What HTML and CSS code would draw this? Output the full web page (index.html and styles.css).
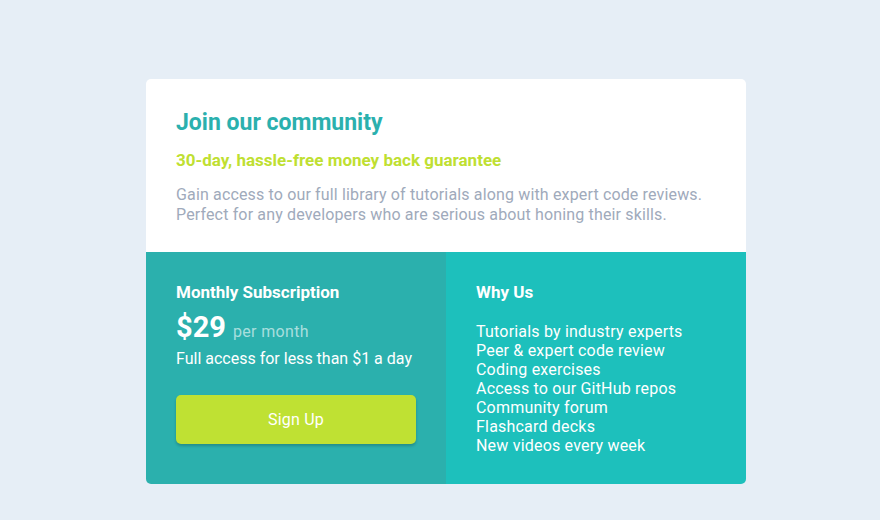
FILE: index.html
```html
<!DOCTYPE html>
<html lang="en">
<head>
<meta charset="utf-8">
<title>Single Price Grid</title>
<link rel="stylesheet" href="styles.css">
</head>
<body>
<main class="card">
  <section class="intro">
    <h1 class="title">Join our community</h1>
    <h2 class="subtitle">30-day, hassle-free money back guarantee</h2>
    <p class="desc">Gain access to our full library of tutorials along with expert code reviews.<br>Perfect for any developers who are serious about honing their skills.</p>
  </section>
  <div class="bottom">
    <section class="sub">
      <h3 class="heading">Monthly Subscription</h3>
      <p class="price"><span class="amount">$29</span><span class="per">per month</span></p>
      <p class="note">Full access for less than $1 a day</p>
      <button class="btn">Sign Up</button>
    </section>
    <section class="why">
      <h3 class="heading">Why Us</h3>
      <ul class="list">
        <li>Tutorials by industry experts</li>
        <li>Peer &amp; expert code review</li>
        <li>Coding exercises</li>
        <li>Access to our GitHub repos</li>
        <li>Community forum</li>
        <li>Flashcard decks</li>
        <li>New videos every week</li>
      </ul>
    </section>
  </div>
</main>
</body>
</html>
```

FILE: styles.css
```css
* { box-sizing: border-box; }
html, body { margin: 0; padding: 0; }
body {
  background: #e6eef6;
  font-family: Roboto, "Noto Sans", sans-serif;
  height: 520px;
  padding-top: 79px;
}
.card {
  width: 600px;
  margin-left: 146px;
  border-radius: 5px;
  overflow: hidden;
}
.intro {
  background: #fff;
  height: 173px;
  padding: 28px 30px 0;
}
.title {
  margin: 0;
  color: #2bb0ae;
  font-size: 23px;
  font-weight: 700;
  line-height: 32px;
}
.subtitle {
  margin: 11px 0 0;
  color: #bfdf32;
  font-size: 17px;
  font-weight: 700;
  line-height: 20px;
}
.desc {
  margin: 15px 0 0;
  color: #a0aabb;
  font-size: 16px;
  letter-spacing: 0.15px;
  line-height: 20px;
}
.bottom {
  display: flex;
  height: 232px;
  color: #fff;
}
.sub {
  flex: 1;
  background: #2bb0ad;
  padding: 29px 30px 0;
}
.why {
  flex: 1;
  background: #1dc0bc;
  padding: 29px 30px 0;
}
.heading {
  margin: 0;
  font-size: 17px;
  font-weight: 700;
  line-height: 22px;
}
.price {
  margin: 9px 0 0;
  display: flex;
  align-items: baseline;
  line-height: 30px;
}
.amount {
  font-size: 29px;
  font-weight: 700;
}
.per {
  margin-left: 7px;
  font-size: 16px;
  letter-spacing: 0.35px;
  color: rgba(255,255,255,0.6);
}
.note {
  margin: 2px 0 0;
  font-size: 16px;
  line-height: 20px;
}
.btn {
  display: block;
  width: 240px;
  height: 49px;
  margin-top: 26px;
  border: 0;
  border-radius: 5px;
  background: #bfe133;
  color: #fff;
  font-family: inherit;
  font-size: 16px;
  letter-spacing: 0.2px;
  box-shadow: 0 2px 3px rgba(0,0,0,0.2);
}
.list {
  list-style: none;
  margin: 19px 0 0;
  padding: 0;
  font-size: 16px;
  letter-spacing: 0.2px;
  line-height: 19px;
}
```
